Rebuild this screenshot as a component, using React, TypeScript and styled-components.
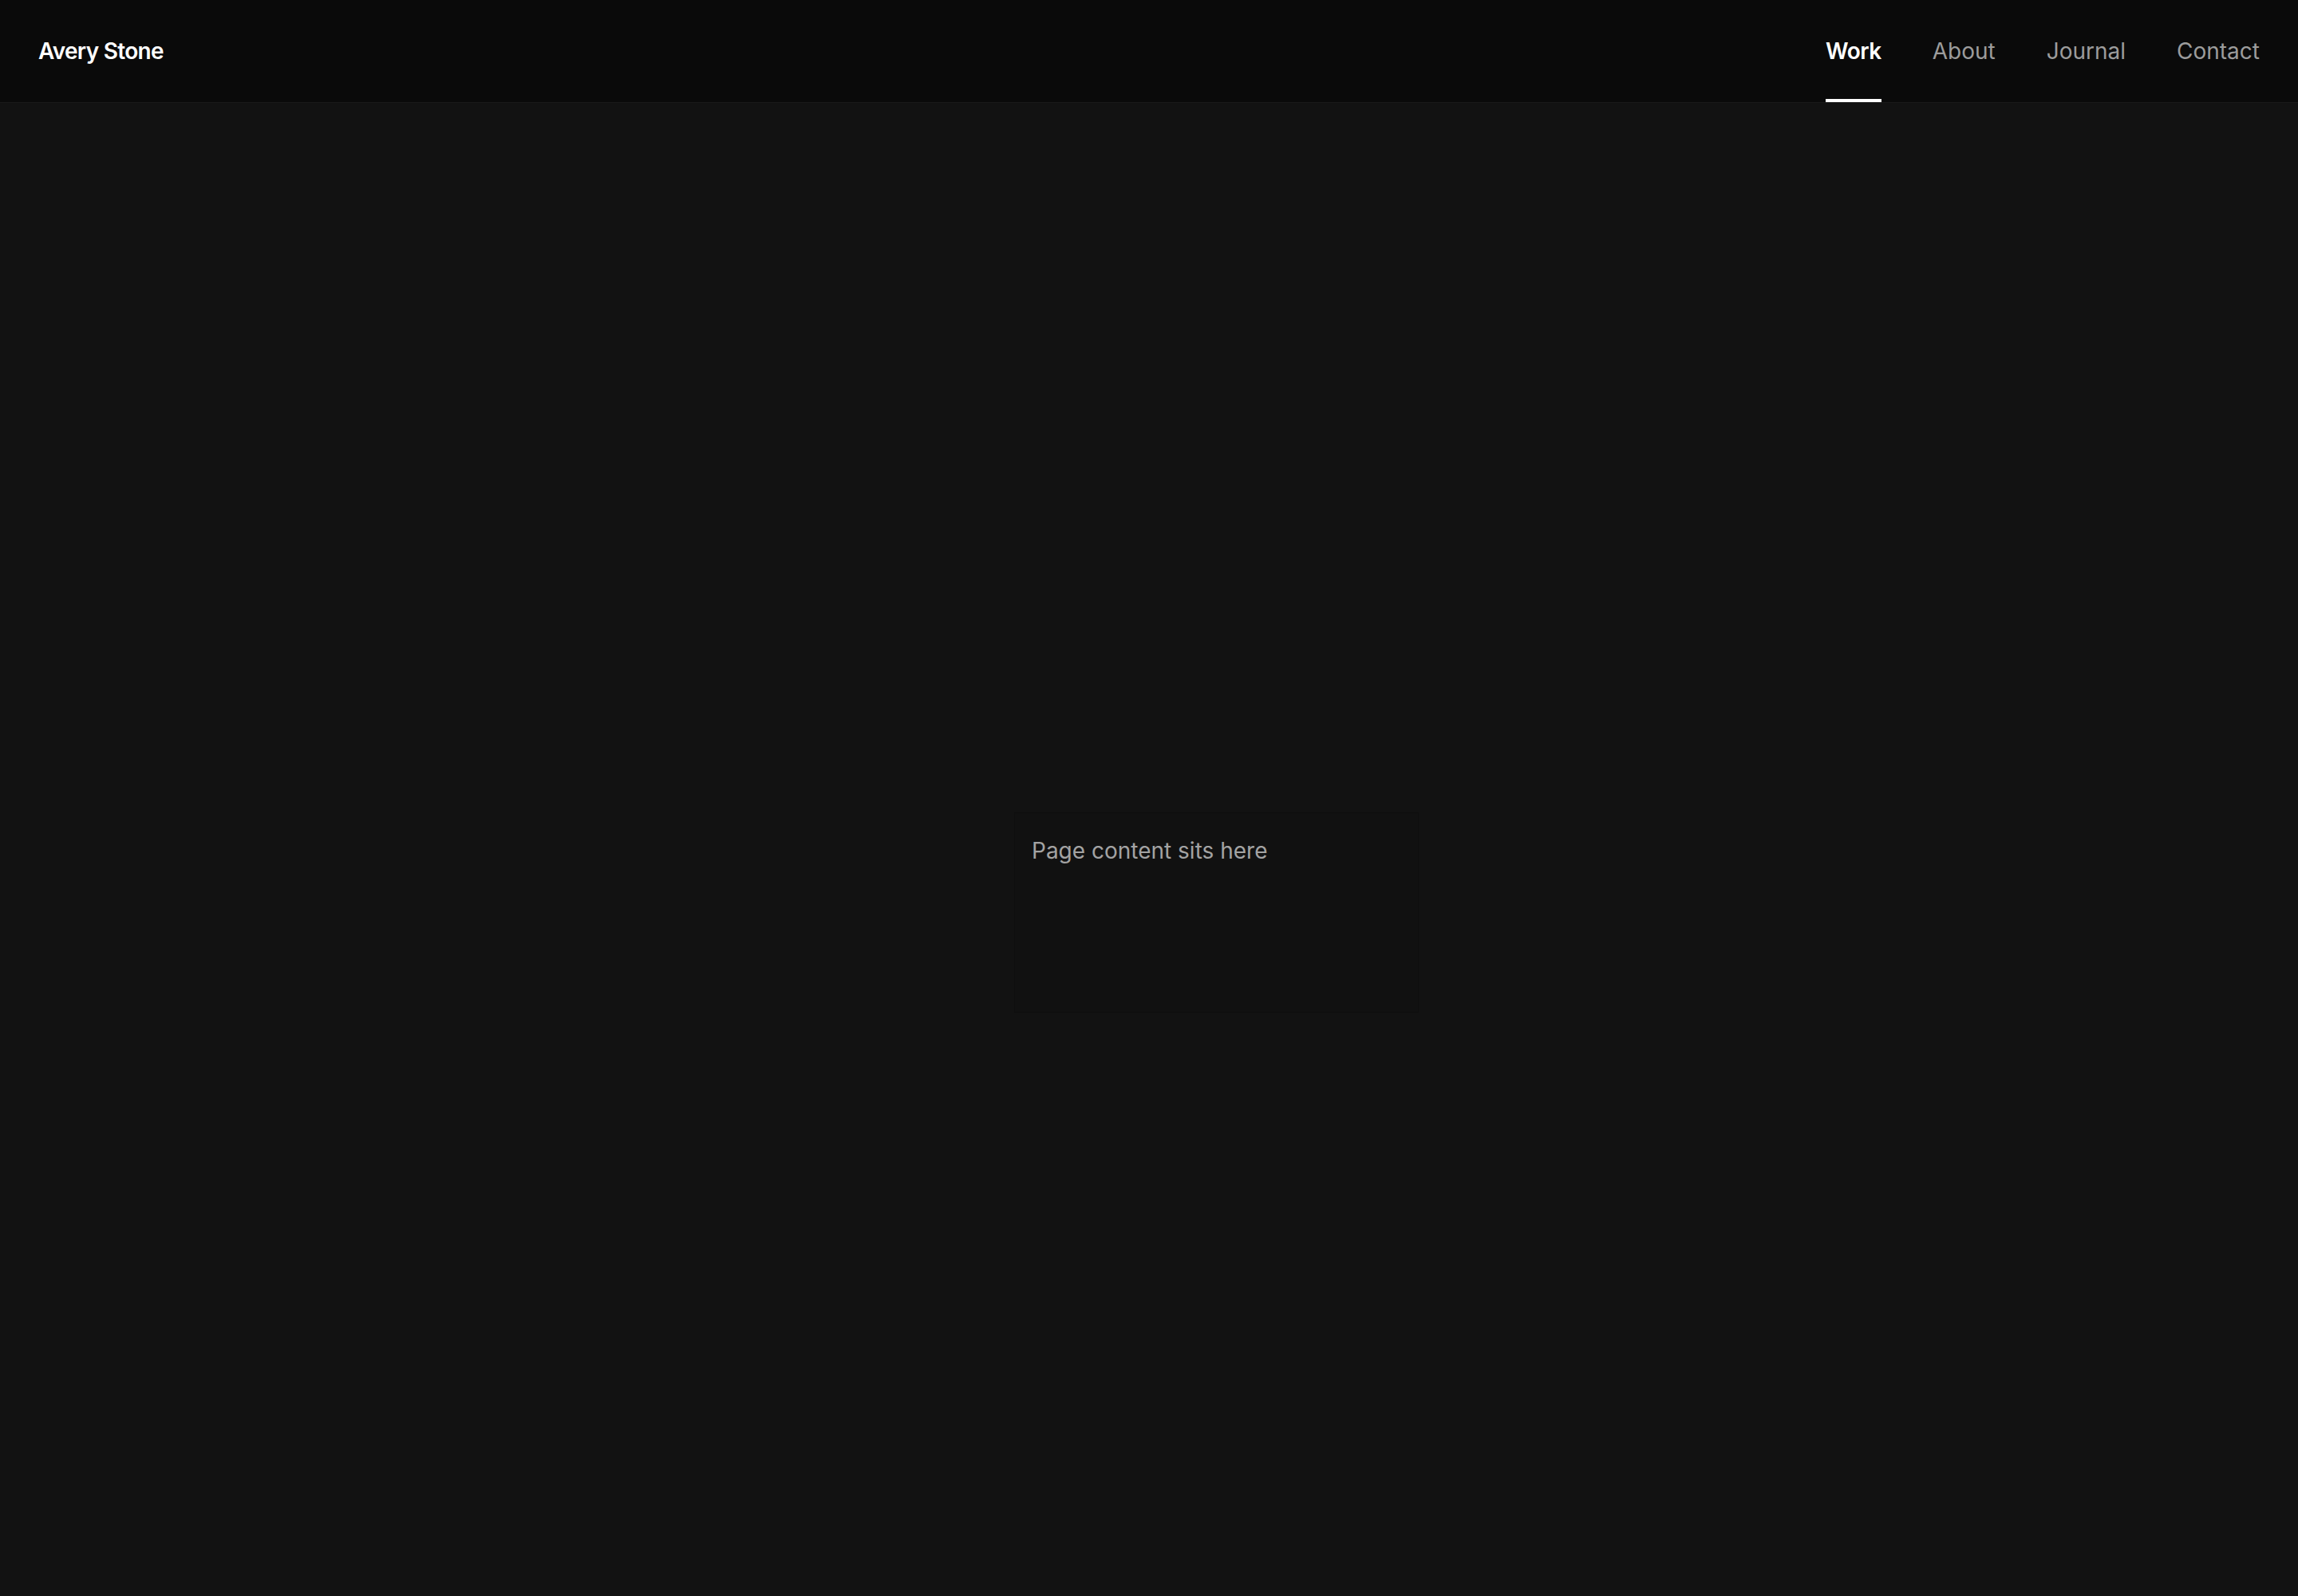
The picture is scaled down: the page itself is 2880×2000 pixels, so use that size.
import styled, { createGlobalStyle } from "styled-components";

const GlobalStyle = createGlobalStyle`
  html, body {
    margin: 0;
    padding: 0;
    background: #121212;
  }
  body {
    font-family: Inter, "Noto Sans", "Liberation Sans", sans-serif;
    -webkit-font-smoothing: antialiased;
  }
  * {
    box-sizing: border-box;
  }
`;

const SPage = styled.div`
  min-height: 2000px;
  background: #121212;
  display: flex;
  flex-direction: column;
`;

const SHeader = styled.header`
  height: 129px;
  background: #0a0a0a;
  border-bottom: 1px solid #1a1a1a;
  display: flex;
  align-items: center;
  justify-content: space-between;
  padding: 0 48px;
`;

const SLogo = styled.a`
  color: #ffffff;
  font-size: 28px;
  font-weight: 600;
  letter-spacing: -0.7px;
  text-decoration: none;
`;

const SNav = styled.nav`
  display: flex;
  align-self: stretch;
  gap: 64px;
`;

const SNavLink = styled.a<{ $active?: boolean }>`
  position: relative;
  display: flex;
  align-items: center;
  font-size: 28px;
  font-weight: ${({ $active }) => ($active ? 600 : 400)};
  letter-spacing: ${({ $active }) => ($active ? "-0.5px" : "0")};
  color: ${({ $active }) => ($active ? "#ffffff" : "#9c9c9c")};
  text-decoration: none;
  cursor: pointer;

  &::after {
    content: "";
    position: absolute;
    left: 0;
    right: 0;
    bottom: 0;
    height: 4px;
    background: #ffffff;
    display: ${({ $active }) => ($active ? "block" : "none")};
  }
`;

const SMain = styled.main`
  flex: 1;
  padding: 889px 0 0 1271px;
`;

const SPlaceholder = styled.div`
  width: 507px;
  height: 251px;
  padding: 26px 21px;
  background: #111111;
  border: 1px solid #0e0e0e;
`;

const SText = styled.p`
  margin: 0;
  font-size: 28px;
  line-height: 1.5;
  color: #a3a3a3;
`;

const links = ["Work", "About", "Journal", "Contact"];

const App = () => {
  const active = "Work";

  return (
    <>
      <GlobalStyle />
      <SPage>
        <SHeader>
          <SLogo>Avery Stone</SLogo>
          <SNav>
            {links.map((l) => (
              <SNavLink key={l} $active={l === active}>
                {l}
              </SNavLink>
            ))}
          </SNav>
        </SHeader>
        <SMain>
          <SPlaceholder>
            <SText>Page content sits here</SText>
          </SPlaceholder>
        </SMain>
      </SPage>
    </>
  );
};

export default App;
